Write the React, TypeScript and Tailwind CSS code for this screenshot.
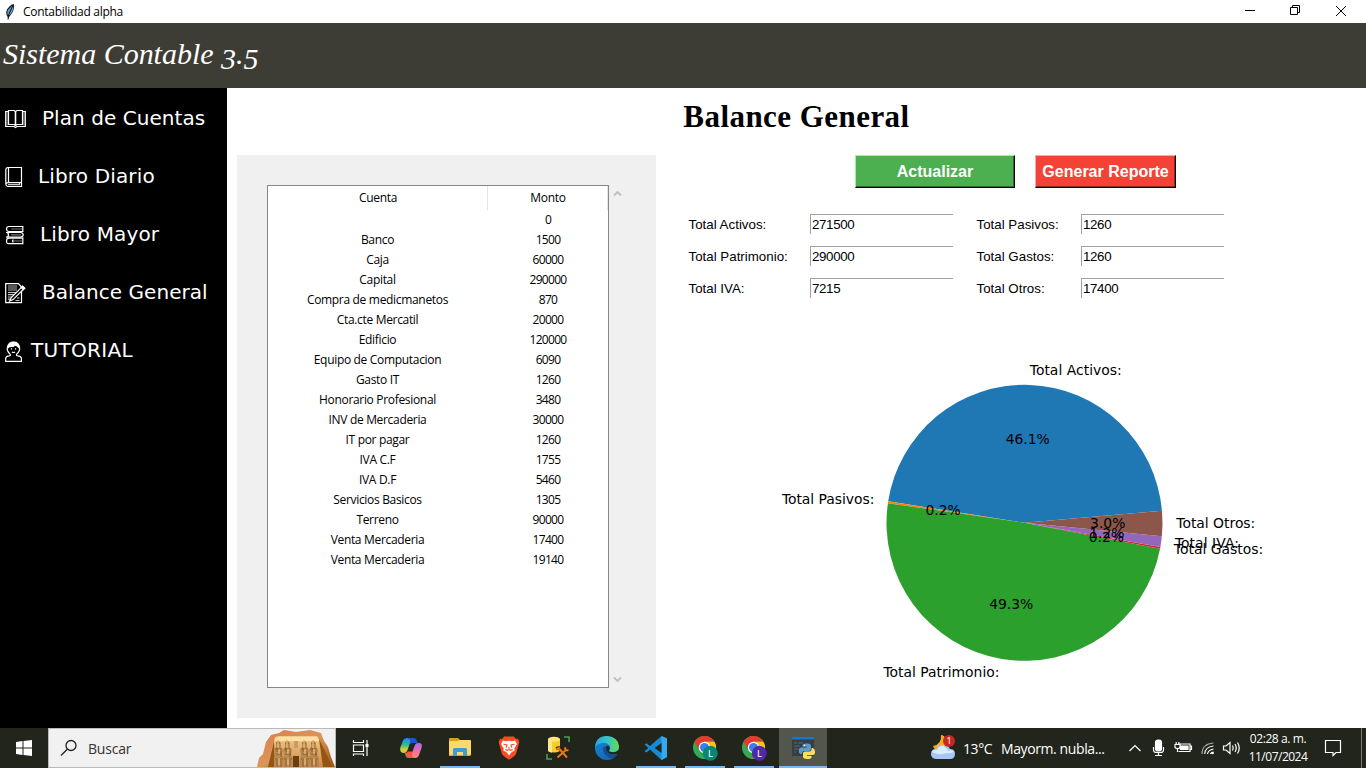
import React from "react";

const accounts: [string, string][] = [
  ["", "0"],
  ["Banco", "1500"],
  ["Caja", "60000"],
  ["Capital", "290000"],
  ["Compra de medicmanetos", "870"],
  ["Cta.cte Mercatil", "20000"],
  ["Edificio", "120000"],
  ["Equipo de Computacion", "6090"],
  ["Gasto IT", "1260"],
  ["Honorario Profesional", "3480"],
  ["INV de Mercaderia", "30000"],
  ["IT por pagar", "1260"],
  ["IVA C.F", "1755"],
  ["IVA D.F", "5460"],
  ["Servicios Basicos", "1305"],
  ["Terreno", "90000"],
  ["Venta Mercaderia", "17400"],
  ["Venta Mercaderia", "19140"],
];

const totals: [string, string][] = [
  ["Total Activos:", "271500"],
  ["Total Pasivos:", "1260"],
  ["Total Patrimonio:", "290000"],
  ["Total Gastos:", "1260"],
  ["Total IVA:", "7215"],
  ["Total Otros:", "17400"],
];

const slices = [
  { label: "Total Activos:", value: 271500, color: "#1f77b4", width: 92 },
  { label: "Total Pasivos:", value: 1260, color: "#ff7f0e", width: 92.5 },
  { label: "Total Patrimonio:", value: 290000, color: "#2ca02c", width: 116 },
  { label: "Total Gastos:", value: 1260, color: "#d62728", width: 89.5 },
  { label: "Total IVA:", value: 7215, color: "#9467bd", width: 64 },
  { label: "Total Otros:", value: 17400, color: "#8c564b", width: 79 },
];

function PieChart() {
  const cx = 264.5;
  const cy = 172.8;
  const r = 138;
  const sum = slices.reduce((s, x) => s + x.value, 0);
  const point = (deg: number, radius: number) => {
    const a = (deg * Math.PI) / 180;
    return [cx + radius * Math.cos(a), cy - radius * Math.sin(a)];
  };
  let start = 5;
  const parts = slices.map((s) => {
    const sweep = (s.value / sum) * 360;
    const mid = start + sweep / 2;
    const part = { ...s, a: start, b: start + sweep, mid, pct: ((s.value / sum) * 100).toFixed(1) + "%" };
    start += sweep;
    return part;
  });
  return (
    <svg width="520" height="340" viewBox="0 0 520 340" className="ml-[90px] block">
      {parts.map((p) => {
        const [x1, y1] = point(p.a, r);
        const [x2, y2] = point(p.b, r);
        return <path key={p.label} d={`M${cx} ${cy}L${x1} ${y1}A${r} ${r} 0 0 0 ${x2} ${y2}Z`} fill={p.color} />;
      })}
      <g fontFamily="DejaVu Sans, sans-serif" fontSize="13.9" fill="#000">
        {parts.map((p) => {
          const [lx, ly] = point(p.mid, r * 1.1);
          const [px, py] = point(p.mid, r * 0.6);
          return (
            <g key={p.label}>
              <text x={lx} y={ly + 4.1} textLength={p.width} textAnchor={lx < cx ? "end" : "start"}>
                {p.label}
              </text>
              <text x={px + 0.4} y={py + 4.3} textAnchor="middle">
                {p.pct}
              </text>
            </g>
          );
        })}
      </g>
    </svg>
  );
}

const navSvg = {
  width: 22,
  height: 22,
  viewBox: "0 0 22 22",
  fill: "none",
  stroke: "#fff",
  strokeWidth: 1.2,
  className: "mt-1 shrink-0",
};

const OpenBookIcon = () => (
  <svg {...navSvg}>
    <path d="M3.5 2.5H.7V17.5H9L10.5 18.5L12 17.5H20.3V2.5H17.5" />
    <path d="M3.5 1.5H9L10.5 2.5L12 1.5H17.5V15.5H12L10.5 16.5L9 15.5H3.5Z" />
    <path d="M10.5 2.5V16.5" strokeWidth="1.6" />
    <path d="M2 3V16.5M19 3V16.5" stroke="#999" />
  </svg>
);
const ClosedBookIcon = () => (
  <svg {...navSvg}>
    <path d="M3.5 .5H16.5V19.5H3Q.8 19 .8 17V2.5Q1 .5 3.5 .5ZM3.5 .5V15.5M.8 17Q1.3 15.6 3.5 15.6H16.5" />
    <path d="M3 17.6H14.5V16" stroke="#ccc" />
  </svg>
);
const BooksIcon = () => (
  <svg {...navSvg}>
    <path d="M18.5 1.5H4Q1.5 1.5 1.5 4T4 6.5H18.5M17.8 1.5V6.5" />
    <path d="M1 7.5H15.5Q18.2 7.5 18.2 9.8T15.5 12.2H1M2.5 7.5Q4.5 9.8 2.5 12.2" />
    <path d="M18.5 13.2H4Q1.5 13.2 1.5 16T4 18.7H18.5M17.8 13.2V18.7M8.5 14.8Q6.5 16 8.5 17.2" />
    <path d="M6.5 4H17M6 9.8H16M9 16H17" stroke="#777" />
  </svg>
);
const MemoIcon = () => (
  <svg {...navSvg}>
    <path d="M.7 .7H13.5L16.5 4V19.7H.7Z" />
    <path d="M3 3H12M3 5H12M3 7H12" stroke="#777" strokeWidth="1.6" />
    <path d="M3 9.5H12M3 11.7H10M3 14H8M3 16.2H6M10.5 17.5H14.5M12 15H14.5" stroke="#ccc" />
    <path d="M17.5 3.4L6.3 14.6L4.6 18L8.1 16.6L19.5 5.2Z" fill="#000" />
    <path d="M16.2 4.5L17.5 3.2L19.7 5.2L18.3 6.6Z" fill="#fff" />
  </svg>
);
const PersonIcon = () => (
  <svg {...navSvg}>
    <path d="M5.2 13.2Q1.3 10 2.6 5.4Q4 .8 8.5 1Q13 .8 14.4 5.4Q15.5 10 11.6 13.2Q10.8 14.6 13 14.8Q16.3 15 16.4 17.5V20.4H.7V17.5Q.8 15 4 14.8Q6 14.6 5.2 13.2Z" />
    <path d="M3 7Q4 5 8 5.5Q9.5 3.8 11 4.5Q12.8 5 14 7Q13.3 1.5 8.5 1.3Q3.8 1.5 3 7Z" fill="#fff" />
    <path d="M6.5 7.2V8.6M10.5 7.2V8.6M7 11Q8.5 12 10 11" />
  </svg>
);

function NavItem({ icon, children, text }: { icon: React.ReactNode; children: React.ReactNode; text: string }) {
  return (
    <div className="flex h-[58px] items-center pl-[5px]">
      {icon}
      <span className={text}>{children}</span>
    </div>
  );
}

const iconProps = { width: 26, height: 26, viewBox: "0 0 26 26" };

const Copilot = () => (
  <svg {...iconProps}>
    <defs>
      <linearGradient id="cpA" x1="0" y1="0" x2="0" y2="1">
        <stop offset="0" stopColor="#168cec" />
        <stop offset=".45" stopColor="#35b78b" />
        <stop offset=".75" stopColor="#cfd03a" />
        <stop offset="1" stopColor="#e9c02c" />
      </linearGradient>
      <linearGradient id="cpB" x1="0" y1="0" x2="0" y2="1">
        <stop offset="0" stopColor="#a26cf0" />
        <stop offset=".5" stopColor="#ee6cae" />
        <stop offset="1" stopColor="#fb8a66" />
      </linearGradient>
    </defs>
    <path d="M9 3H15Q13 4 12 8L9.5 15Q8.5 18 6 18H5Q1 17 2.5 12L5 5.5Q6 3 9 3Z" fill="url(#cpA)" />
    <path d="M9 3H16Q18 3 19 6L19.6 8H14.5Q12.5 8 11.7 9.5L12.3 6Q12 3.5 9 3Z" fill="#1c55cf" />
    <path d="M17 23H11Q13 22 14 18L16.5 11Q17.5 8 20 8H21Q25 8 23.5 13L21 20Q20 23 17 23Z" fill="url(#cpB)" />
    <path d="M17 23H10Q8 23 7 19L6.6 18Q9 18 10 16.5H14.3L13.7 19.5Q14 22 17 23Z" fill="#ee5a45" />
  </svg>
);
const Explorer = () => (
  <svg {...iconProps}>
    <path d="M2 4Q2 3 3 3H11L13 5H23V21H2Z" fill="#dca018" />
    <path d="M2 6H11L12 5H23Q24 5 24 6V20H2Z" fill="#ffd968" />
    <path d="M6 21V14.5Q6 13 7.5 13H18.5Q20 13 20 14.5V21H16V17H10V21Z" fill="#3f9bd6" />
    <path d="M2 19.5H6V20.5H2ZM20 19.5H24V20.5H20Z" fill="#efb93b" />
  </svg>
);
const Brave = () => (
  <svg {...iconProps}>
    <path d="M8.2 1.5H17.8L20 4L22 3.8L23.3 7L22.7 9.4L20 19Q19 21 13 24.8Q7 21 6 19L3.3 9.4L2.7 7L4 3.8L6 4Z" fill="#fb4b22" />
    <path d="M7 5.5L10 6.2L13 5.7L16 6.2L19 5.5L21 9L18.3 13.5L18.7 15.5L15.5 17.3L13 20.5L10.5 17.3L7.3 15.5L7.7 13.5L5 9Z" fill="#fff" />
    <path d="M7.5 9.2L11 10L10 12.7M18.5 9.2L15 10L16 12.7M9.3 14.6L12.5 15.4M16.7 14.6L13.5 15.4M13 12V15" stroke="#fb4b22" strokeWidth="1.1" fill="none" />
  </svg>
);
const Database = () => (
  <svg {...iconProps}>
    <path d="M3 4V16Q9 19 15 16V4Z" fill="#f4ce2c" />
    <path d="M3 4V16Q5 17.5 7 17.5V6Z" fill="#ffe889" />
    <ellipse cx="9" cy="4.2" rx="6" ry="2.5" fill="#ffe37b" />
    <path d="M19 2H24V7M2 19V24H7" stroke="#4f9d54" strokeWidth="1.6" fill="none" />
    <path d="M14 13L22 22M21 14L13 22M11 13.5L15 12.5M20 12.5L20.5 15L23.3 15.3" stroke="#21251c" strokeWidth="3.2" />
    <path d="M13.5 13L22 22.5M21.5 14.5L12.5 22.5M11 14.5L15 12.5M20 12.2L20.5 15L23.5 15.3" stroke="#ef7415" strokeWidth="2" />
  </svg>
);
const Edge = () => (
  <svg {...iconProps}>
    <defs>
      <linearGradient id="edgeTop">
        <stop stopColor="#24a8e1" />
        <stop offset=".55" stopColor="#38c6c0" />
        <stop offset="1" stopColor="#68dc48" />
      </linearGradient>
      <linearGradient id="edgeLow" x1="0" y1="0" x2="1" y2="1">
        <stop stopColor="#1689dc" />
        <stop offset="1" stopColor="#155ba9" />
      </linearGradient>
    </defs>
    <circle cx="13" cy="13" r="12" fill="url(#edgeLow)" />
    <path d="M1 12Q2 1 13 1Q24 2 25 11Q25 17 19 17Q14.5 17 15 15Q17 13 15.5 10.5Q13 7 8 8Q3 9 1 12Z" fill="url(#edgeTop)" />
    <path d="M9 13Q8.5 20 16 23Q20 24 24 19Q18 21 15 18Q12.5 15.8 12 12Q10 10 9 13Z" fill="#134e95" />
    <path d="M12 12Q12 20.5 24 19.2L25.5 17L24.6 15Q22 18 17 17Q14.2 16.7 15.2 15.2Q16.5 13.5 15 11.5Q13 10 12 12Z" fill="#21251c" />
  </svg>
);
const VSCode = () => (
  <svg {...iconProps}>
    <path d="M18.5 1L24 3.5V22L18.5 25L7 14.5L3.5 17.5L1.5 16.3L5.3 13L1.5 9.5L3.5 8.3L7 11Z" fill="#168bd5" />
    <path d="M18.5 1L24 3.5V22L18.5 25Z" fill="#35a8ee" />
    <path d="M18.5 8L11.7 13L18.5 18Z" fill="#21251c" />
  </svg>
);
const Chrome = ({ badge }: { badge: string }) => (
  <svg {...iconProps}>
    <circle cx="12.5" cy="12.5" r="11.5" fill="#34a853" />
    <path d="M2.54 6.75A11.5 11.5 0 0 1 22.46 6.75H12.5V12.5L7.5 15.5Z" fill="#e33b2e" />
    <path d="M22.46 6.75A11.5 11.5 0 0 1 12.5 24L17.5 15.5L12.5 6.75Z" fill="#fbc116" />
    <circle cx="12.5" cy="12.5" r="5.7" fill="#fff" />
    <circle cx="12.5" cy="12.5" r="4.5" fill="#3b7ded" />
    <circle cx="18.3" cy="18.3" r="7.5" fill={badge} />
    <text x="18.6" y="22" textAnchor="middle" fontFamily="Noto Sans, sans-serif" fontSize="9.5" fill="#fff">
      L
    </text>
  </svg>
);
const PythonWindow = () => (
  <svg {...iconProps}>
    <path d="M2 2H24V21H2Z" fill="#383d42" />
    <path d="M2 2H24V4.5H2Z" fill="#1978c5" />
    <path d="M4 8H7M8 8H13M4 11H10M4 14H8M4 17H6" stroke="#53705b" strokeWidth="1" />
    <path d="M16.5 8.5Q21 8 21 11V14Q21 16 19 16H14Q12 16 12 19H10.5Q8.5 18 8.7 15Q9 12.5 11 12.5H17V11.7H12.5V10.5Q12.5 8.5 16.5 8.5Z" fill="#5b9ccc" />
    <path d="M17.5 24Q13 24 13 21.5V18.5Q13 16.5 15 16.5H19.5Q21.7 16.5 21.7 13H23Q25 14 25 17Q25 20 23 20H17V20.8H21.5V22Q21.5 24 17.5 24Z" fill="#ffdf62" />
    <circle cx="14.4" cy="10.2" r=".7" fill="#fff" />
  </svg>
);

function TaskButton({ children, open, active }: { children: React.ReactNode; open?: boolean; active?: boolean }) {
  return (
    <div className={active ? "ml-px flex h-full w-12 flex-col items-center bg-[#52564d]" : "flex h-full w-[49px] flex-col items-center"}>
      <div className="flex h-[38px] items-center pt-0.5">{children}</div>
      {open && <div className={active ? "h-0.5 w-12 bg-[#76b9ed]" : "h-0.5 w-10 bg-[#76b9ed]"} />}
    </div>
  );
}

function Temple() {
  return (
    <svg width="78" height="38" viewBox="0 0 78 38" className="ml-auto">
      <defs>
        <linearGradient id="rock" x1="0" y1="0" x2="1" y2="1">
          <stop stopColor="#d87d48" />
          <stop offset=".5" stopColor="#dc955a" />
          <stop offset="1" stopColor="#97520d" />
        </linearGradient>
        <linearGradient id="wall" x1="0" y1="0" x2="0" y2="1">
          <stop stopColor="#f3cb8b" />
          <stop offset="1" stopColor="#c98a48" />
        </linearGradient>
      </defs>
      <path d="M0 38L2 29L6 25L9 13L14 6L22 4L27 1L39 3L53 1L64 4L67 12L71 18L74 28L78 38Z" fill="url(#rock)" />
      <path d="M18 8L22 7H60L76 38H10Z" fill="url(#wall)" />
      <path d="M18 10L22 8H60L63 12H18Z" fill="#ffdfa6" />
      <path d="M17 12L18 38H11ZM62 10L66 38H76Z" fill="#95540f" />
      <path d="M37 12H41V19H37Z" fill="#c99c62" />
      <path d="M36 27H42V38H36Z" fill="#6b3d12" />
      {[21, 30, 47, 56].map((x) => (
        <g key={x} transform={`translate(${x} 0)`}>
          <path d="M-2 14L0 11L3 14V18L5 21L4 26L6 29V38H-4V29L-3 26L-4 21L-2 18Z" fill="#b9894f" />
          <path d="M-2 14H2M-3 20H4M-2 25H4M-1 18V23M3 22V28M-3 30H5M-1 31V38M3 31V38" stroke="#86552a" strokeWidth=".8" />
          <path d="M0 12V19M1 20V25M1 29V36" stroke="#f5cd90" strokeWidth="1" />
        </g>
      ))}
    </svg>
  );
}

function Tray() {
  return (
    <div className="ml-auto flex h-full items-center font-['Open_Sans','Noto_Sans',sans-serif] text-white">
      <svg width="28" height="28" viewBox="0 0 28 28">
        <path d="M11 1Q12 10 3 12Q5 18 12 16Q19 13 16 5Q14 1 11 1Z" fill="#f9a91b" />
        <path d="M7 25Q1 25 1 20Q1 15 6 15Q8 10 14 11Q18 11 20 15Q25 15 25 20Q25 25 20 25Z" fill="#a6c7f5" />
        <path d="M2 18Q3 15 7 16Q10 10 15 13Q18 15 18 17Q22 15 24 18Q19 20 16 19Q10 22 2 18Z" fill="#dcecff" />
        <circle cx="19" cy="7" r="6" fill="#c92820" />
        <text x="19" y="10.3" fontSize="9" fill="#fff" textAnchor="middle" fontFamily="Noto Sans, sans-serif">1</text>
      </svg>
      <span className="ml-[5px] w-[38px] whitespace-nowrap text-[14px] tracking-[-0.4px]">13°C</span>
      <span className="w-[127px] whitespace-nowrap text-[14px] tracking-[-0.4px]">Mayorm. nubla...</span>
      <svg width="116" height="24" viewBox="0 0 116 24" fill="none" stroke="#fff" strokeWidth="1.2">
        <path d="M1.5 15L7 9.5L12.5 15" />
        <rect x="27.5" y="4" width="6" height="11" rx="2.5" fill="#fff" />
        <path d="M25.5 11V14Q25.5 16.5 28.5 16.5H32.5Q35.5 16.5 35.5 14V11M30.5 17V19M27 19.5H34" />
        <path d="M50.5 8H62V15.5H50.5M62 10H63.5V13.5H62" />
        <path d="M52.5 10H60V13.5H52.5Z" fill="#fff" />
        <path d="M47 8.5H52V11Q52 12.5 49.5 12.5T47 11ZM48.2 6V8.5M50.8 6V8.5M49.5 12.5V16" fill="#21251c" />
        <g strokeWidth="1.1">
          <path d="M74 18Q74 8 85.5 7" stroke="#aaa" />
          <path d="M76.7 18Q77 11 85.5 10M79.5 18Q80 14 85.5 13M82.4 18Q82.5 16.8 85.5 16" />
          <circle cx="84.5" cy="17" r=".8" fill="#fff" />
        </g>
        <path d="M95.5 10H98L102 6.5V17.5L98 14H95.5ZM104.5 9.5Q106 12 104.5 14.5M107 8Q109.5 12 107 16M109.5 6.5Q113 12 109.5 17.5" />
      </svg>
      <div className="flex w-[69px] flex-col items-center pr-px text-[12px] leading-[18px]">
        <span className="whitespace-nowrap tracking-[-0.4px]">02:28 a. m.</span>
        <span className="whitespace-nowrap tracking-[-0.5px]">11/07/2024</span>
      </div>
      <svg width="18" height="18" viewBox="0 0 18 18" fill="none" stroke="#fff" strokeWidth="1.2" className="ml-[11px]">
        <path d="M1.5 1.5H16.5V13.5H12L9 16.5V13.5H1.5Z" />
      </svg>
      <div className="mr-1 ml-[19px] h-full w-px bg-[#777a73]" />
    </div>
  );
}

export default function App() {
  return (
    <div className="flex h-[768px] w-[1366px] flex-col overflow-hidden bg-white font-['Liberation_Sans',sans-serif] text-black">
      <div className="flex h-[23px] shrink-0 items-center">
        <svg width="18" height="20" viewBox="0 0 18 20" className="ml-0.5">
          <path d="M6 16Q2 9 7 5Q9 2 12 2Q13 8 8 14Z" fill="#1d2229" />
          <path d="M6 13Q4 9 8 6L11 3Q12 8 8 13Z" fill="#6699cf" />
          <path d="M11 3L7 12L6 17.5" stroke="#101419" fill="none" />
        </svg>
        <span className="ml-[3px] font-['Open_Sans','Noto_Sans',sans-serif] text-[12px] tracking-[-0.28px]">Contabilidad alpha</span>
        <svg width="121" height="20" viewBox="0 0 121 20" className="mb-[3px] ml-auto" fill="none" stroke="#000">
          <path d="M0 10.5H10M45.5 7.5H52.5V14.5H45.5ZM47.5 7.5V5.5H54.5V12.5H52.5M91 6L101 16M101 6L91 16" />
        </svg>
      </div>

      <div className="flex h-[65px] shrink-0 items-center bg-[#3e3d35] pb-1 pl-[3px]">
        <span className="font-['Liberation_Serif',serif] text-[30px] leading-[38px] tracking-[-0.02px] text-white italic">
          Sistema Contable <span className="inline-block translate-y-[5px]">3</span>.<span className="inline-block translate-y-[5px]">5</span>
        </span>
      </div>

      <div className="flex h-[640px] shrink-0">
        <nav className="w-[227px] bg-black pt-px font-['DejaVu_Sans',sans-serif] text-[20px] text-white">
          <NavItem icon={<OpenBookIcon />} text="ml-[15px] whitespace-nowrap tracking-[0.05px]">Plan de Cuentas</NavItem>
          <NavItem icon={<ClosedBookIcon />} text="ml-[11px] whitespace-nowrap tracking-[0.15px]">Libro Diario</NavItem>
          <NavItem icon={<BooksIcon />} text="ml-[13px] whitespace-nowrap tracking-[0.15px]">Libro Mayor</NavItem>
          <NavItem icon={<MemoIcon />} text="ml-[15px] whitespace-nowrap tracking-[0.05px]">Balance General</NavItem>
          <NavItem icon={<PersonIcon />} text="ml-[4px] whitespace-nowrap tracking-[0.3px]">TUTORIAL</NavItem>
        </nav>

        <main className="flex flex-1 flex-col">
          <h1 className="h-[67px] pt-[10px] text-center font-['Liberation_Serif',serif] text-[31px] leading-[38px] font-bold tracking-[0.45px]">
            Balance General
          </h1>
          <div className="flex flex-1">
            <section className="ml-2.5 flex h-[563px] w-[419px] bg-[#f0f0f0] pt-[30px] pl-[30px]">
              <div className="h-[503px] w-[342px] border border-[#828790] bg-white font-['Open_Sans','Noto_Sans',sans-serif] text-[12px] tracking-[-0.32px]">
                <div className="flex h-6 text-center leading-[24px]">
                  <div className="w-[220px] border-r border-[#e5e5e5] pl-px">Cuenta</div>
                  <div className="w-[120px] border-r border-[#e5e5e5] pl-px">Monto</div>
                </div>
                {accounts.map(([name, amount], i) => (
                  <div key={i} className="flex h-5 text-center leading-[20px]">
                    <span className="w-[219px]">{name}</span>
                    <span className="w-[121px] pl-px tracking-[-0.7px]">{amount}</span>
                  </div>
                ))}
              </div>
              <div className="flex h-[503px] w-[17px] flex-col items-center justify-between py-1">
                <svg width="9" height="9" viewBox="0 0 9 9" fill="none" stroke="#bfbfbf" strokeWidth="1.8">
                  <path d="M1 6.5L4.5 3L8 6.5" />
                </svg>
                <svg width="9" height="9" viewBox="0 0 9 9" fill="none" stroke="#bfbfbf" strokeWidth="1.8">
                  <path d="M1 2.5L4.5 6L8 2.5" />
                </svg>
              </div>
            </section>

            <section className="flex flex-1 flex-col pl-[14px]">
              <div className="flex gap-5 pl-[185px] text-[16px] font-bold text-white">
                <button className="h-[33px] w-[160px] border border-t-[#9ef5a1] border-r-black border-b-black border-l-[#9ef5a1] bg-[#4caf50] shadow-[inset_-1px_-1px_0_#2e6930]">
                  Actualizar
                </button>
                <button className="h-[33px] w-[141px] border border-t-[#ffaaa4] border-r-black border-b-black border-l-[#ffaaa4] bg-[#f44336] whitespace-nowrap shadow-[inset_-1px_-1px_0_#922820]">
                  Generar Reporte
                </button>
              </div>
              <div className="mt-[26px] grid h-[136px] grid-cols-[140px_148px_123px_144px] content-start gap-y-3 pl-[18px] text-[13.33px]">
                {totals.map(([label, value]) => (
                  <React.Fragment key={label}>
                    <span className="ml-[0.5px] h-5 leading-[21px]">{label}</span>
                    <span className="-ml-[18px] h-5 w-[143px] border-t border-l border-[#a0a0a0] pl-px leading-[20px] tracking-[-0.35px]">{value}</span>
                  </React.Fragment>
                ))}
              </div>
              <PieChart />
            </section>
          </div>
        </main>
      </div>

      <footer className="flex h-10 shrink-0 items-center bg-[#21251c]">
        <div className="flex w-12 justify-center">
          <svg width="16" height="16" viewBox="0 0 16 16" fill="#fff">
            <path d="M0 2L6.5 1V7.5H0ZM7.5 .9L16 0V7.5H7.5ZM0 8.5H6.5V15L0 14ZM7.5 8.5H16V16L7.5 15.1Z" />
          </svg>
        </div>
        <div className="flex h-10 w-72 items-center border border-[#b9bab8] bg-[#f1f1f1] pl-[11px]">
          <svg width="18" height="18" viewBox="0 0 18 18" fill="none" stroke="#222" strokeWidth="1.3">
            <circle cx="11" cy="6.5" r="5" />
            <path d="M7.3 10.2L1 16.5" />
          </svg>
          <span className="ml-2.5 font-['Open_Sans','Noto_Sans',sans-serif] text-[14px] tracking-[-0.2px] text-[#333]">Buscar</span>
          <Temple />
        </div>
        <div className="flex w-[50px] justify-center">
          <svg width="18" height="18" viewBox="0 0 18 18" fill="none" stroke="#fff" strokeWidth="1.2">
            <path d="M1.5 1V3.5H11.5V1M1.5 6H11.5V12.5H1.5ZM1.5 17V15H11.5V17M15 1V17" />
            <path d="M13.5 5H16.5V8H13.5Z" fill="#fff" stroke="none" />
          </svg>
        </div>
        <TaskButton><Copilot /></TaskButton>
        <TaskButton open><Explorer /></TaskButton>
        <TaskButton><Brave /></TaskButton>
        <TaskButton><Database /></TaskButton>
        <TaskButton><Edge /></TaskButton>
        <TaskButton open><VSCode /></TaskButton>
        <TaskButton open><Chrome badge="#078577" /></TaskButton>
        <TaskButton open><Chrome badge="#5029a7" /></TaskButton>
        <TaskButton open active><PythonWindow /></TaskButton>
        <Tray />
      </footer>
    </div>
  );
}
